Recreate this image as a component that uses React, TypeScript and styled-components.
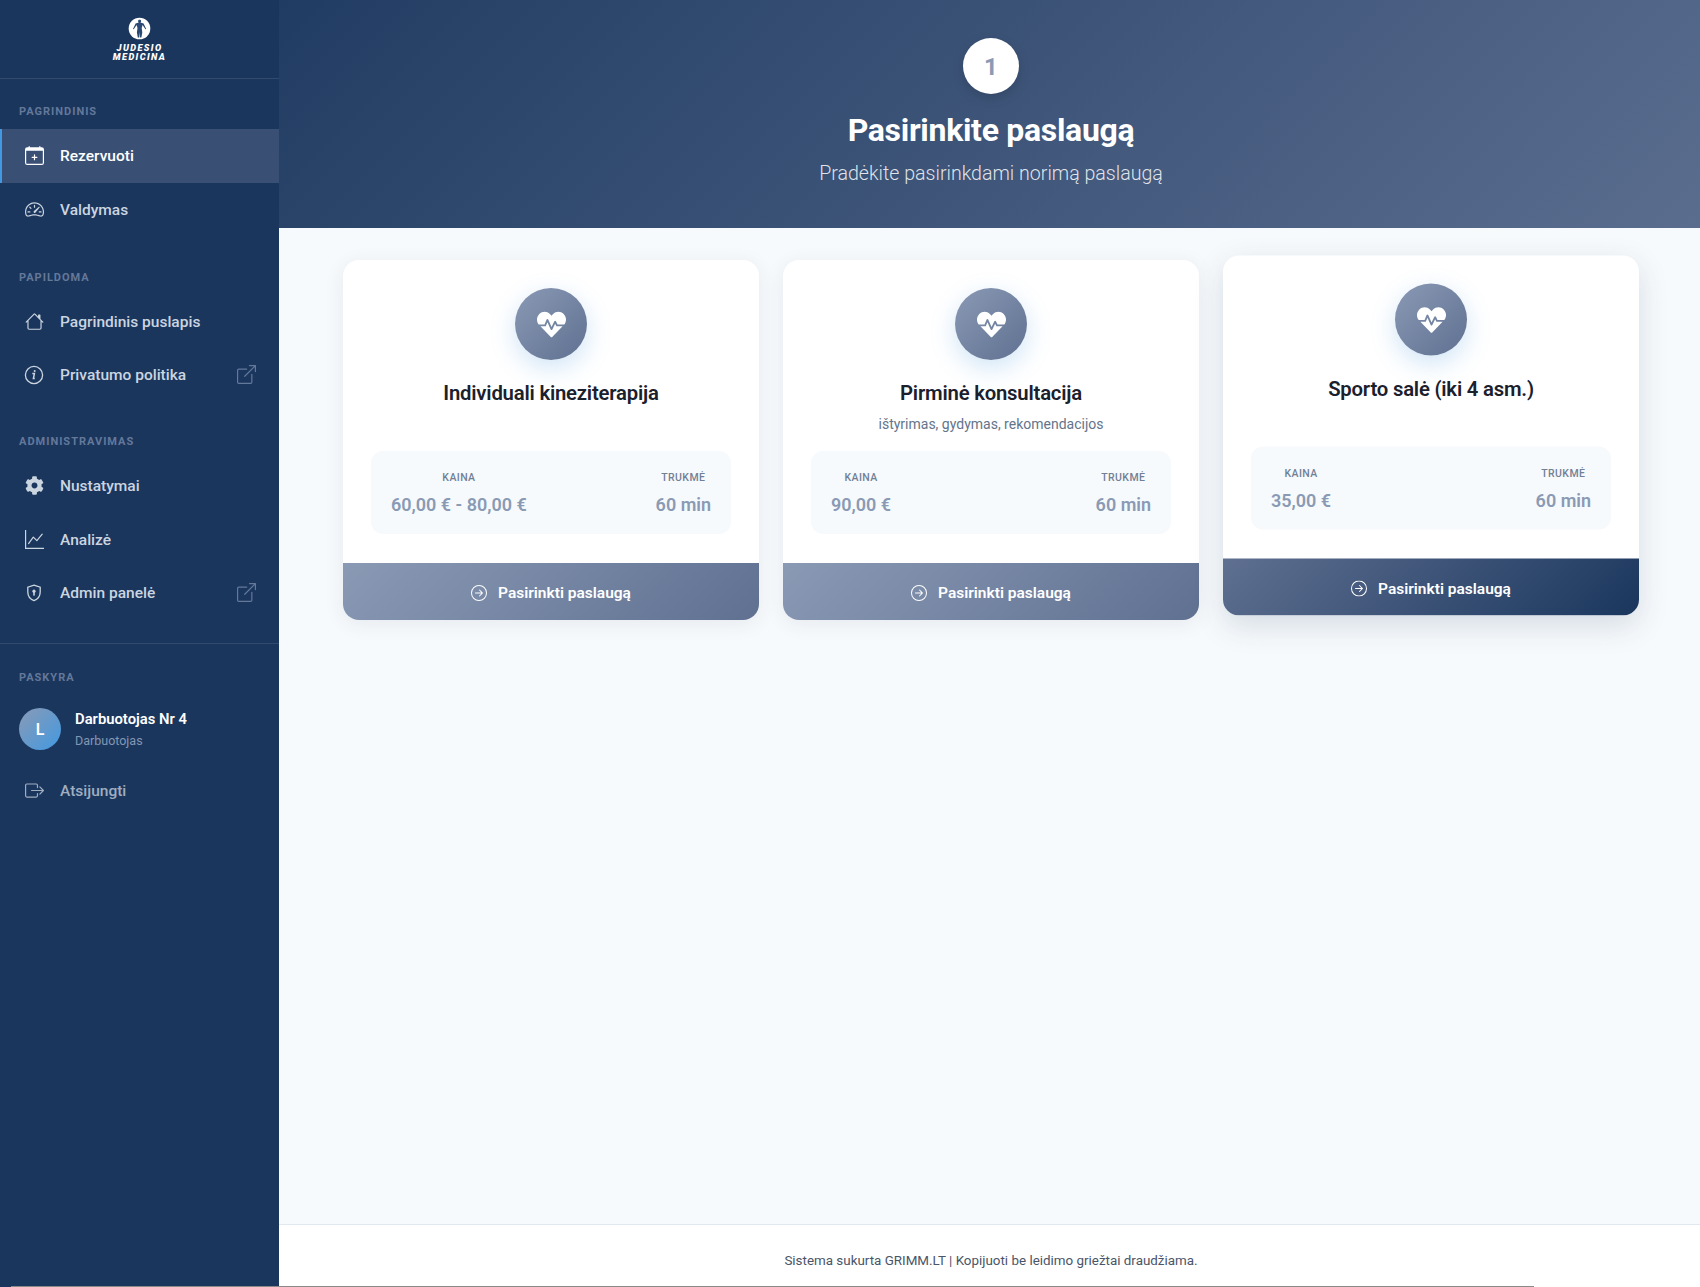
import { FunctionComponent, ReactNode } from 'react';
import styled, { createGlobalStyle } from 'styled-components';
import { FaCog, FaHeartbeat } from 'react-icons/fa';
import {
    BsCalendarPlus,
    BsSpeedometer2,
    BsHouse,
    BsGraphUp,
    BsBoxArrowUpRight,
    BsBoxArrowRight,
    BsArrowRightCircle,
} from 'react-icons/bs';

const GlobalStyle = createGlobalStyle`
    html, body {
        margin: 0;
        padding: 0;
        background: #f7fafc;
        font-family: Roboto, "Liberation Sans", sans-serif;
    }
    * {
        box-sizing: border-box;
    }
`;

const Layout = styled.div`
    display: flex;
    width: 1700px;
    height: 1287px;
    overflow: hidden;
    position: relative;
`;

const Sidebar = styled.aside`
    width: 279px;
    flex-shrink: 0;
    background: #1a365d;
    display: flex;
    flex-direction: column;
`;

const LogoBox = styled.div`
    height: 79px;
    padding-top: 17px;
    border-bottom: 1px solid rgba(255, 255, 255, 0.1);
    display: flex;
    flex-direction: column;
    align-items: center;
`;

const LogoText = styled.div`
    font-size: 9.2px;
    line-height: 9px;
    font-weight: 900;
    font-style: italic;
    letter-spacing: 1.4px;
    color: #fff;
    text-align: center;
    margin-top: 2.5px;
`;

const NavSection = styled.div<{ $top: number }>`
    padding-top: ${p => p.$top}px;
`;

const SectionLabel = styled.div`
    font-size: 11px;
    line-height: 14px;
    font-weight: 700;
    letter-spacing: 1px;
    color: #64789a;
    padding-left: 19px;
    margin-bottom: 10px;
`;

const NavItem = styled.div<{ $active?: boolean }>`
    height: 53.5px;
    display: flex;
    align-items: center;
    padding: 0 24px 0 ${p => (p.$active ? 22 : 24)}px;
    border-left: ${p => (p.$active ? '2px solid #4299e1' : 'none')};
    background: ${p => (p.$active ? '#3a4f74' : 'transparent')};
    color: ${p => (p.$active ? '#fff' : '#cbd5e0')};
    font-size: 15.5px;
    font-weight: 500;
`;

const NavIcon = styled.span`
    width: 20px;
    height: 20px;
    display: flex;
    align-items: center;
    justify-content: center;
    margin-right: 16px;
    font-size: 19px;
`;

const NavText = styled.span`
    flex: 1;
    padding-top: 1px;
`;

const External = styled.span`
    color: #64789a;
    font-size: 19px;
    display: flex;
    margin-right: -1px;
`;

const Divider = styled.div`
    height: 1px;
    background: rgba(255, 255, 255, 0.1);
    margin-top: 23.5px;
`;

const UserRow = styled.div`
    display: flex;
    align-items: center;
    padding: 0 19px;
    margin-top: 23px;
    height: 42px;
`;

const Avatar = styled.div`
    width: 42px;
    height: 42px;
    border-radius: 50%;
    background: linear-gradient(135deg, #8a9ab5, #4299e1);
    color: #fff;
    font-size: 16px;
    font-weight: 600;
    display: flex;
    align-items: center;
    justify-content: center;
    margin-right: 14px;
`;

const UserInfo = styled.div`
    padding-top: 2px;
`;

const UserName = styled.div`
    color: #fff;
    font-size: 14.8px;
    font-weight: 600;
    line-height: 18px;
`;

const UserRole = styled.div`
    color: #8496b3;
    font-size: 12.5px;
    line-height: 18px;
    margin-top: 4px;
`;

const Logout = styled(NavItem)`
    margin-top: 14px;
    color: #a0aec0;
`;

const Main = styled.main`
    flex: 1;
    min-width: 0;
    display: flex;
    flex-direction: column;
    background: #f7fafc;
`;

const Hero = styled.header`
    height: 228px;
    padding: 38px 0 0 3px;
    background: linear-gradient(135deg, #1a365d -12%, #5a6d8f 100%);
    display: flex;
    flex-direction: column;
    align-items: center;
    color: #fff;
`;

const StepCircle = styled.div`
    width: 56px;
    height: 56px;
    padding-top: 2px;
    border-radius: 50%;
    background: #fff;
    color: #8a9ab5;
    font-size: 24px;
    font-weight: 700;
    display: flex;
    align-items: center;
    justify-content: center;
    box-shadow: 0 4px 12px rgba(0, 0, 0, 0.15);
`;

const HeroTitle = styled.h1`
    margin: 16px 0 0;
    font-size: 32px;
    line-height: 40px;
    font-weight: 700;
    letter-spacing: -0.3px;
`;

const HeroSub = styled.p`
    margin: 12px 0 0;
    font-size: 19.6px;
    line-height: 24px;
    font-weight: 300;
    color: rgba(255, 255, 255, 0.85);
`;

const CardsRow = styled.section`
    flex: 1;
    display: grid;
    grid-template-columns: repeat(3, 416px);
    gap: 24px;
    align-items: start;
    padding: 32px 61px 0 64px;
`;

const Card = styled.article<{ $hover?: boolean }>`
    height: 360px;
    background: #fff;
    border-radius: 16px;
    overflow: hidden;
    display: flex;
    flex-direction: column;
    transform: translateY(${p => (p.$hover ? '-4.5px' : '0')});
    box-shadow: ${p =>
        p.$hover ? '0 10px 30px rgba(26, 54, 93, 0.15)' : '0 4px 20px rgba(26, 54, 93, 0.08)'};
`;

const CardBody = styled.div`
    flex: 1;
    padding: 28px 28px 29px;
    display: flex;
    flex-direction: column;
    align-items: center;
`;

const IconCircle = styled.div`
    width: 72px;
    height: 72px;
    border-radius: 50%;
    background: linear-gradient(135deg, #8a9ab5, #5f7091);
    box-shadow: 0 8px 24px rgba(66, 153, 225, 0.25);
    color: #fff;
    font-size: 29px;
    display: flex;
    align-items: center;
    justify-content: center;
`;

const CardTitle = styled.h3`
    margin: 20px 0 0;
    font-size: 20.3px;
    line-height: 26px;
    font-weight: 600;
    color: #1a202c;
    letter-spacing: -0.2px;
`;

const CardSub = styled.p`
    margin: 9px 0 0;
    font-size: 14px;
    line-height: 18px;
    color: #64748b;
`;

const InfoBox = styled.div`
    width: 360px;
    height: 83px;
    margin-top: auto;
    border-radius: 12px;
    background: #f7fafc;
    display: flex;
    justify-content: space-between;
    padding: 19px 20px 0;
`;

const InfoCol = styled.div`
    display: flex;
    flex-direction: column;
    align-items: center;
`;

const InfoLabel = styled.div`
    font-size: 10.5px;
    line-height: 16px;
    font-weight: 500;
    letter-spacing: 0.4px;
    color: #718096;
`;

const InfoValue = styled.div`
    font-size: 18px;
    line-height: 24px;
    font-weight: 600;
    color: #8a9ab5;
    margin-top: 7px;
`;

const SelectButton = styled.div<{ $hover?: boolean }>`
    height: 57px;
    padding-top: 2px;
    display: flex;
    align-items: center;
    justify-content: center;
    gap: 11px;
    color: #fff;
    font-size: 15.5px;
    font-weight: 600;
    background: ${p =>
        p.$hover
            ? 'linear-gradient(135deg, #5f7091, #1a365d)'
            : 'linear-gradient(135deg, #8a9ab5, #5f7091)'};
`;

const Footer = styled.footer`
    height: 63px;
    border-top: 1px solid #e2e8f0;
    background: #fff;
    display: flex;
    justify-content: center;
    padding: 28px 0 0 3px;
    font-size: 13.4px;
    line-height: 16px;
    color: #4a5568;
`;

const BottomEdge = styled.div`
    position: absolute;
    left: 11px;
    bottom: 0;
    width: 1523px;
    height: 1px;
    background: #8a8a8a;
`;

const Logo = () => (
    <svg width="23" height="23" viewBox="0 0 23 23">
        <circle cx="11.5" cy="11.5" r="10.8" fill="#fff" />
        <path
            d="M11.5 2.5c1 0 1.6.8 1.6 1.7 0 .6-.3 1.1-.7 1.4l3.2 1 2.6 5.4-.8.3-2.8-4.3-.9 3 .6 4.4-.9 5h-1.3l-.4-5.2-.4 5.2H9.8l-.9-5 .6-4.4-.9-3-2.8 4.3-.8-.3 2.6-5.4 3.2-1c-.4-.3-.7-.8-.7-1.4 0-.9.6-1.7 1.6-1.7z"
            fill="#2a4a75"
        />
    </svg>
);

const InfoItalic = () => (
    <svg width="20" height="20" viewBox="0 0 20 20" fill="none" stroke="currentColor">
        <circle cx="10" cy="10" r="8.6" strokeWidth="1.3" />
        <path d="M8.3 8.6h2.1l-1 5h1.4" strokeWidth="1.5" />
        <circle cx="10.7" cy="6" r="1" fill="currentColor" stroke="none" />
    </svg>
);

const ShieldLock = () => (
    <svg width="18" height="18" viewBox="0 0 18 18" fill="none">
        <path
            d="M9 1.2 15.2 3.2V8c0 4-2.6 7.2-6.2 8.6C5.4 15.2 2.8 12 2.8 8V3.2z"
            stroke="currentColor"
            strokeWidth="1.3"
        />
        <circle cx="9" cy="7.2" r="1.6" fill="currentColor" />
        <rect x="8.2" y="7.6" width="1.6" height="4" fill="currentColor" />
    </svg>
);

interface IMenu {
    icon: ReactNode;
    label: string;
    active?: boolean;
    external?: boolean;
}

const MenuLink: FunctionComponent<IMenu> = ({ icon, label, active, external }) => (
    <NavItem $active={active}>
        <NavIcon>{icon}</NavIcon>
        <NavText>{label}</NavText>
        {external && (
            <External>
                <BsBoxArrowUpRight />
            </External>
        )}
    </NavItem>
);

const services = [
    { title: 'Individuali kineziterapija', price: '60,00 € - 80,00 €' },
    { title: 'Pirminė konsultacija', sub: 'ištyrimas, gydymas, rekomendacijos', price: '90,00 €' },
    { title: 'Sporto salė (iki 4 asm.)', price: '35,00 €', hover: true },
];

const App = () => (
    <Layout>
        <GlobalStyle />
        <Sidebar>
            <LogoBox>
                <Logo />
                <LogoText>
                    JUDESIO
                    <br />
                    MEDICINA
                </LogoText>
            </LogoBox>
            <NavSection $top={26}>
                <SectionLabel>PAGRINDINIS</SectionLabel>
                <MenuLink active icon={<BsCalendarPlus />} label="Rezervuoti" />
                <MenuLink icon={<BsSpeedometer2 />} label="Valdymas" />
            </NavSection>
            <NavSection $top={34.5}>
                <SectionLabel>PAPILDOMA</SectionLabel>
                <MenuLink icon={<BsHouse />} label="Pagrindinis puslapis" />
                <MenuLink icon={<InfoItalic />} label="Privatumo politika" external />
            </NavSection>
            <NavSection $top={33.5}>
                <SectionLabel>ADMINISTRAVIMAS</SectionLabel>
                <MenuLink icon={<FaCog />} label="Nustatymai" />
                <MenuLink icon={<BsGraphUp />} label="Analizė" />
                <MenuLink icon={<ShieldLock />} label="Admin panelė" external />
            </NavSection>
            <Divider />
            <NavSection $top={27}>
                <SectionLabel>PASKYRA</SectionLabel>
                <UserRow>
                    <Avatar>L</Avatar>
                    <UserInfo>
                        <UserName>Darbuotojas Nr 4</UserName>
                        <UserRole>Darbuotojas</UserRole>
                    </UserInfo>
                </UserRow>
                <Logout>
                    <NavIcon>
                        <BsBoxArrowRight />
                    </NavIcon>
                    <NavText>Atsijungti</NavText>
                </Logout>
            </NavSection>
        </Sidebar>
        <Main>
            <Hero>
                <StepCircle>1</StepCircle>
                <HeroTitle>Pasirinkite paslaugą</HeroTitle>
                <HeroSub>Pradėkite pasirinkdami norimą paslaugą</HeroSub>
            </Hero>
            <CardsRow>
                {services.map(s => (
                    <Card key={s.title} $hover={s.hover}>
                        <CardBody>
                            <IconCircle>
                                <FaHeartbeat />
                            </IconCircle>
                            <CardTitle>{s.title}</CardTitle>
                            {s.sub && <CardSub>{s.sub}</CardSub>}
                            <InfoBox>
                                <InfoCol>
                                    <InfoLabel>KAINA</InfoLabel>
                                    <InfoValue>{s.price}</InfoValue>
                                </InfoCol>
                                <InfoCol>
                                    <InfoLabel>TRUKMĖ</InfoLabel>
                                    <InfoValue>60 min</InfoValue>
                                </InfoCol>
                            </InfoBox>
                        </CardBody>
                        <SelectButton $hover={s.hover}>
                            <BsArrowRightCircle size={16} />
                            Pasirinkti paslaugą
                        </SelectButton>
                    </Card>
                ))}
            </CardsRow>
            <Footer>Sistema sukurta GRIMM.LT | Kopijuoti be leidimo griežtai draudžiama.</Footer>
        </Main>
        <BottomEdge />
    </Layout>
);

export default App;
